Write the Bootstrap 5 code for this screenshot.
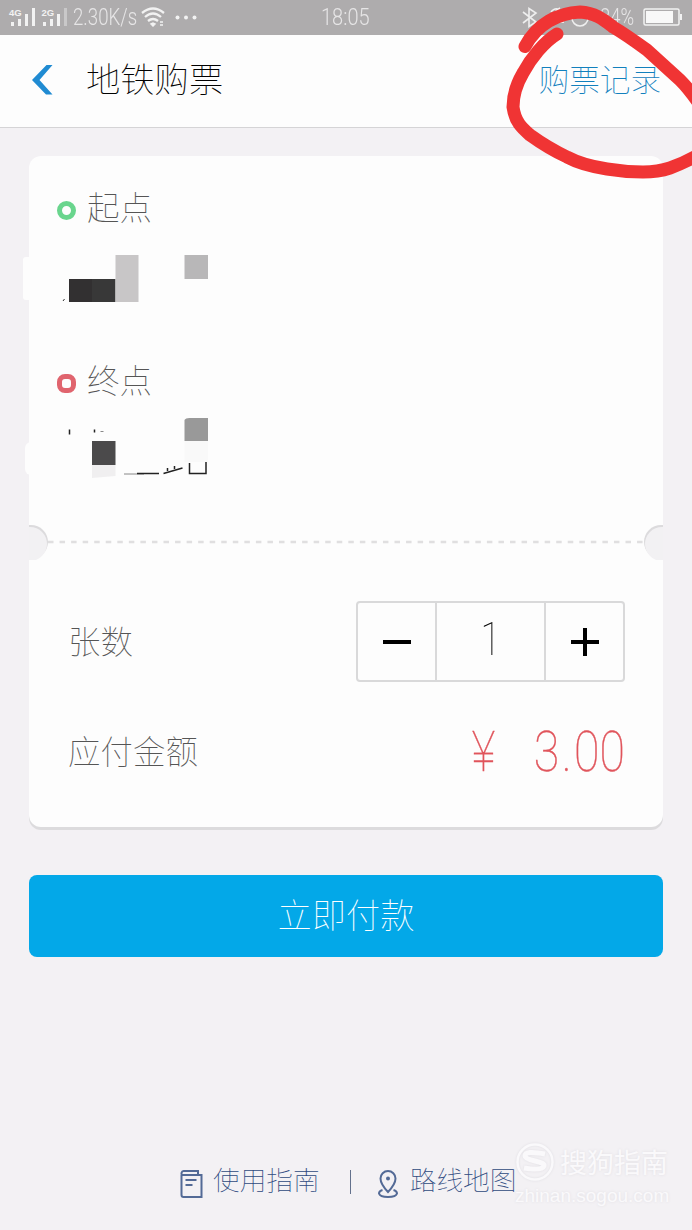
<!DOCTYPE html>
<html lang="zh-CN">
<head>
<meta charset="utf-8">
<meta name="viewport" content="width=device-width, initial-scale=1">
<title>地铁购票</title>
<link href="https://cdn.jsdelivr.net/npm/bootstrap@5.3.0/dist/css/bootstrap.min.css" rel="stylesheet">
<style>
body{background:#f3f1f4;font-family:Roboto,"Noto Sans CJK SC",sans-serif;font-weight:100;height:1230px;overflow:hidden;color:#222}
svg{display:block;flex:none}
.cjk{font-family:"Noto Sans CJK SC",sans-serif;white-space:nowrap}
.statusbar{height:35px;background:#aeacad;color:#e6e5e6}
.stat-num{font-size:23px;line-height:34px;font-weight:300;white-space:nowrap;transform-origin:left center}
.topbar{height:93px;background:#fdfdfd;border-bottom:1px solid #d5d4d6;padding:0 31px 9px 31px}
.page-title{font-size:34.3px;line-height:40px;color:#000;margin-left:33px;font-weight:100}
.records{font-size:30.6px;line-height:40px;color:#1280bd;padding-top:2px}
.ticket{margin:28px 29px 0;height:671px;background:#fdfdfd;border-radius:12px;box-shadow:0 3px 0 #dcdbdd}
.stop-row{height:40px;padding-left:28px}
.ring{width:19px;height:19px;border:5px solid #69d58d;border-radius:50%;margin-top:5px;margin-right:11px}
.ring.end{border-color:#e0646e;border-radius:8px}
.label-text{font-size:32.5px;line-height:40px;color:#555;padding-bottom:4px}
.tear{height:36px}
.stepper{width:269px;height:81px;border:2px solid #d9d9da;border-radius:4px}
.stepper button{width:77px;background:none;border:0;padding:0}
.qty{border:solid #d9d9da;border-width:0 2px;font-size:46px;line-height:73px;color:#000}
.price{font-size:56px;line-height:58px;color:#e0555c;white-space:nowrap;-webkit-text-stroke:.4px #e0555c}
.narrow{display:inline-block;transform:scaleX(.83);transform-origin:right center}
.spaced{letter-spacing:3px}
.pay{margin:48px 29px 0;height:82px;width:634px;border-radius:8px;background:#03a8e8;color:#fff;border:0;font-size:34.3px;line-height:40px;padding:0 0 7px;font-weight:100}
.links{margin-top:203px;height:44px;color:#2f4a80;padding-left:180px;font-size:26.7px;line-height:40px}
.links svg{margin-top:3px}
.links span{padding-bottom:6px}
.sep{width:1px;height:24px;background:#63718c;margin:0 26px 0 30px}
.watermark{left:514px;top:1141px;color:#faf9fb;text-shadow:0 0 3px #dfdde2}
.wm-name{font-size:27px;line-height:36px;font-weight:400;margin-left:6px}
.wm-url{font-family:"Liberation Sans",sans-serif;font-weight:400;font-size:19px;line-height:24px;margin:1px 0 0 1px}
.marker{left:0;top:0;pointer-events:none}
</style>
</head>
<body class="position-relative">
<header>
  <div class="statusbar d-flex align-items-center">
    <svg width="73" height="35" fill="#f2f2f2" font-family="Liberation Sans" font-size="9.500" font-weight="700"><text x="9" y="15.500">4G</text><text x="41.500" y="15.500">2G</text><path d="M11 22h3v4h-3zM18 19h3v7h-3zM25 14h3v12h-3zM32 8h3v18h-3zM43 22h3v4h-3zM50 19h3v7h-3zM57 14h3v12h-3z"/><path opacity=".4" d="M64 8h3v18h-3z"/></svg>
    <div class="stat-num" style="width:66px;transform:scaleX(.81)">2.30K/s</div>
    <svg width="60" height="35" fill="none" stroke="#f2f2f2" stroke-width="2.300"><path d="M3 13q11-9 22 0M6 17q8-7 16 0M9 21q5-4 10 0"/><path d="M12 24l2-1 2 1-2 2zM21 22h3M21 25h3" fill="#f2f2f2" stroke-width="1.500"/><g fill="#f2f2f2" stroke="none"><circle cx="38.500" cy="17.500" r="2"/><circle cx="47" cy="17.500" r="2"/><circle cx="55.500" cy="17.500" r="2"/></g></svg>
    <div class="stat-num" style="margin-left:122px;width:199px;transform:scaleX(.87)">18:05</div>
    <svg width="80" height="35" fill="none" stroke="#eee" stroke-width="1.600"><path d="M3 12l13 10-7 4.500V8.500l7 4.500L3 23"/><path d="M38 9q-4-1-7 3M40 8a7 7 0 0 0 4 14"/><circle cx="60" cy="18" r="8"/></svg>
    <div class="stat-num" style="width:43px;transform:scaleX(.8)">84%</div>
    <svg width="42" height="35"><rect x="1" y="9" width="35" height="16" rx="1.500" fill="none" stroke="#f2f2f2" stroke-width="1.500"/><rect x="3" y="11" width="27" height="12" fill="#f8f8f8"/><path d="M37 14h2v6h-2z" fill="#f2f2f2"/></svg>
  </div>
  <nav class="topbar d-flex align-items-center">
    <svg width="22" height="32" style="margin-top:7px"><path d="M15.500 1H21.500L8.500 16l13 14.500H15L1 16z" fill="#208bd2"/></svg>
    <div class="page-title cjk">地铁购票</div>
    <a class="records cjk ms-auto text-decoration-none">购票记录</a>
  </nav>
</header>
<main>
  <section class="ticket d-flex flex-column">
    <div class="stop-row d-flex align-items-center" style="margin-top:32px"><span class="ring"></span><span class="label-text cjk">起点</span></div>
    <svg class="overflow-visible" width="634" height="47" style="margin-top:27px"><rect x="-6" y="2" width="10" height="43" rx="3" fill="#fdfdfd"/><path fill="#323031" d="M40 24h23v23H40z"/><path fill="#383838" d="M63 24h23.500v23H63z"/><path fill="#c8c6c7" d="M86.500 0H109.500v47H86.500z"/><path fill="#b8b7b8" d="M155.500 0H179v24h-23.500z"/><path stroke="#333" d="M35.500 44l-1.500 2"/></svg>
    <div class="stop-row d-flex align-items-center" style="margin-top:59px"><span class="ring end"></span><span class="label-text cjk">终点</span></div>
    <svg class="overflow-visible" width="634" height="60" style="margin-top:16px"><rect x="-4" y="25" width="12" height="33" rx="6" fill="#fdfdfd"/><path fill="#4b4a4b" d="M63 24h23.500v24H63z"/><path fill="#f0eff0" d="M63 48h23.500v11L63 61z"/><path fill="#999" d="M155.500 3q1-2 5-2H179v23h-23.500z"/><path fill="#f9f9f9" d="M155.500 24H179v21h-23.500z"/><path fill="none" stroke="#222" stroke-width="1.500" d="M40.500 12.500v5M65.500 12.500v3M134.500 56.500l19-5.500M138.500 51v3M145.500 49v3M160.500 46v10.500h16.500V45"/><path stroke="#888" d="M71.500 14.500h3M95 57h20"/><path stroke="#222" stroke-width="1.500" d="M108 56.500h22"/></svg>
    <svg class="tear" width="634" style="margin-top:47px"><circle cx="2" cy="18" r="17" fill="#dcdbdd"/><circle cx="1" cy="20" r="17" fill="#f2f1f3"/><circle cx="632" cy="18" r="17" fill="#dcdbdd"/><circle cx="633" cy="20" r="17" fill="#f2f1f3"/><path d="M19 18h595" stroke="#e0dfe0" stroke-width="2.500" stroke-dasharray="5.500 6.050"/></svg>
    <div class="d-flex align-items-center justify-content-between" style="height:81px;margin:41px 38px 0 39px">
      <span class="label-text cjk">张数</span>
      <div class="stepper d-flex">
        <button aria-label="减少"><svg class="mx-auto" width="28" height="28"><path d="M0 14h28" stroke="#000" stroke-width="4"/></svg></button>
        <div class="qty flex-fill text-center"><span style="display:inline-block;transform:scaleX(.8)">1</span></div>
        <button aria-label="增加"><svg class="mx-auto" width="28" height="28"><path d="M0 14h28M14 0v28" stroke="#000" stroke-width="4"/></svg></button>
      </div>
    </div>
    <div class="d-flex align-items-center justify-content-between" style="height:60px;margin:40px 38px 0 39px">
      <span class="label-text cjk">应付金额</span>
      <div class="price d-flex"><span class="narrow" style="margin-right:20px">¥</span><span class="narrow"><span class="spaced">3.</span>00</span></div>
    </div>
  </section>
  <button class="pay cjk">立即付款</button>
</main>
<footer class="links cjk d-flex align-items-center">
  <svg width="23" height="28" fill="none" stroke="#536a96" stroke-width="2"><path d="M1.500 5V25q0 2 2 2H21.500V5H3.500Q1 5 1.500 3q.5-2 2-2H18v4M5.500 10h11M5.500 15h7"/></svg>
  <span style="margin-left:10px">使用指南</span><i class="sep"></i>
  <svg width="21" height="28" viewBox="-1 0 21 28" fill="none" stroke="#536a96" stroke-width="2"><path d="M10 22Q2.500 14 2.500 8.500a7.500 7.500 0 0 1 15 0Q17.500 14 10 22zM4.500 20Q1 21 1 23.500q1 3.500 9 3.500t9-3.500Q19 21 15.500 20"/><circle cx="10" cy="8.500" r="2" fill="#536a96" stroke="none"/></svg>
  <span style="margin-left:12px">路线地图</span>
</footer>
<div class="watermark position-absolute cjk">
  <div class="d-flex align-items-center"><svg width="40" height="42" style="filter:drop-shadow(0 0 1px #dfdde2)"><circle cx="21" cy="21" r="17.500" fill="none" stroke="#faf9fb" stroke-width="2.500"/><path d="M31 13q-20-4-20 2 0 3 10 5t9 5q-2 5-20 2" fill="none" stroke="#faf9fb" stroke-width="5"/></svg><span class="wm-name">搜狗指南</span></div>
  <div class="wm-url">zhinan.sogou.com</div>
</div>
<svg class="marker position-absolute" width="692" height="200" fill="none" stroke="#f03434" stroke-width="13" stroke-linecap="round" stroke-linejoin="round"><path d="M525 46.500C537 24 558 13 580 12C596 13 604 20 613 27C625 34 636 42 647 50L680 80Q688 88 698 102M557 34C544 42 531 58 523 73Q513 90 513 107C515 122 522 128 530 135Q548 148 567 157C580 164 594 167 607 169Q625 172 643 172Q658 172 670 168Q684 163 698 155"/></svg>
<script src="https://cdn.jsdelivr.net/npm/bootstrap@5.3.0/dist/js/bootstrap.bundle.min.js"></script>
</body>
</html>
